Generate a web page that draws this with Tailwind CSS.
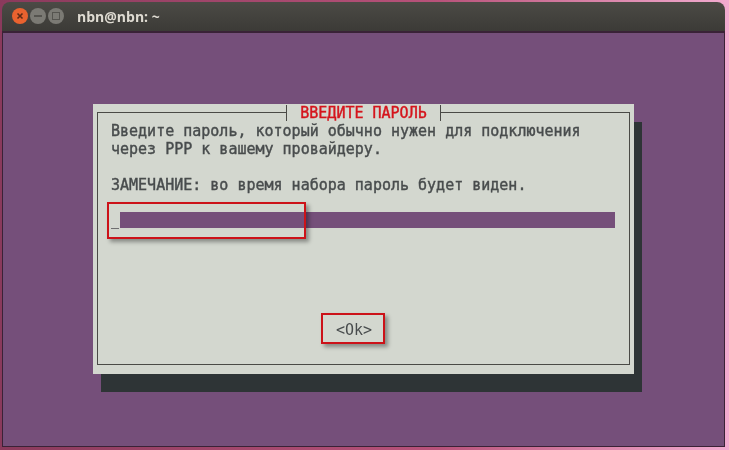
<!DOCTYPE html>
<html lang="ru">
<head>
    <meta charset="UTF-8">
    <title>nbn@nbn: ~</title>
    <script src="https://cdn.jsdelivr.net/npm/@tailwindcss/browser@4"></script>
</head>
<body class="w-[729px] h-[450px] overflow-hidden bg-gradient-to-r from-[#8a3a5c] via-[#b8527a] via-60% to-[#f2abd0]">
    <div class="ml-[2px] pt-[2px] w-[723px] h-[447px] flex flex-col blur-[0.4px]">
        <!-- title bar -->
        <div class="h-[29px] shrink-0 rounded-t-[8px] bg-gradient-to-b from-[#4b4a45] to-[#3c3b37] flex items-center pl-[10px] pb-[1px]">
            <div class="w-[16px] h-[16px] rounded-full bg-[#e9622f] flex items-center justify-center">
                <svg width="8" height="8" viewBox="0 0 8 8"><path d="M1.5 1.5l5 5M6.5 1.5l-5 5" stroke="#5e2a16" stroke-width="1.6"/></svg>
            </div>
            <div class="w-[16px] h-[16px] ml-[2px] rounded-full bg-[#7b7a74] flex items-center justify-center">
                <div class="w-[8px] h-[2px] bg-[#55544f]"></div>
            </div>
            <div class="w-[16px] h-[16px] ml-[2px] rounded-full bg-[#7b7a74] flex items-center justify-center">
                <div class="w-[8px] h-[8px] border border-[#55544f]"></div>
            </div>
            <span class="ml-[13px] font-['Open_Sans',sans-serif] text-[14px] font-bold text-[#dfdbd2]">nbn@nbn: ~</span>
        </div>
        <!-- terminal -->
        <div class="flex-1 bg-[#754f7a] border border-t-2 border-[#3a2237] font-['DejaVu_Sans_Mono',monospace] text-[15px] leading-[18px] text-[#484c4d]">
            <div class="relative ml-[90px] mt-[71px] w-[541px] h-[270px] bg-[#d3d7cf] shadow-[8px_18px_0_#2e3436] pt-[8px] px-[4px]">
                <div class="relative w-[533px] h-[253px] border border-[#4a4a46] pt-[9px] pl-[13px]">
                    <div class="absolute top-[-8px] left-[188px] w-[155px] h-[16px] bg-[#d3d7cf] border-x border-[#4a4a46] text-center text-[#d5141c] leading-[17px] [-webkit-text-stroke:0.4px_#d5141c]">ВВЕДИТЕ ПАРОЛЬ</div>
                    <p class="[-webkit-text-stroke:0.4px_#484c4d]">Введите пароль, который обычно нужен для подключения</p>
                    <p class="[-webkit-text-stroke:0.4px_#484c4d]">через PPP к вашему провайдеру.</p>
                    <p class="mt-[18px] [-webkit-text-stroke:0.4px_#484c4d]">ЗАМЕЧАНИЕ: во время набора пароль будет виден.</p>
                    <div class="flex items-end mt-[18px] h-[17px]">
                        <div class="w-[8px] h-[1px] bg-[#6f6f70] mr-[1px]"></div>
                        <div class="w-[495px] h-[16px] mb-[1px] bg-[#754f7a]"></div>
                    </div>
                    <p class="ml-[225px] mt-[92px]">&lt;Ok&gt;</p>
                </div>
                <!-- annotation boxes -->
                <div class="absolute left-[14px] top-[98px] w-[199px] h-[37px] border-2 border-[#cc1219] shadow-[3px_3px_4px_#0000005c]"></div>
                <div class="absolute left-[228px] top-[209px] w-[64px] h-[31px] border-2 border-[#cc1219] shadow-[3px_3px_4px_#0000005c]"></div>
            </div>
        </div>
    </div>
</body>
</html>
